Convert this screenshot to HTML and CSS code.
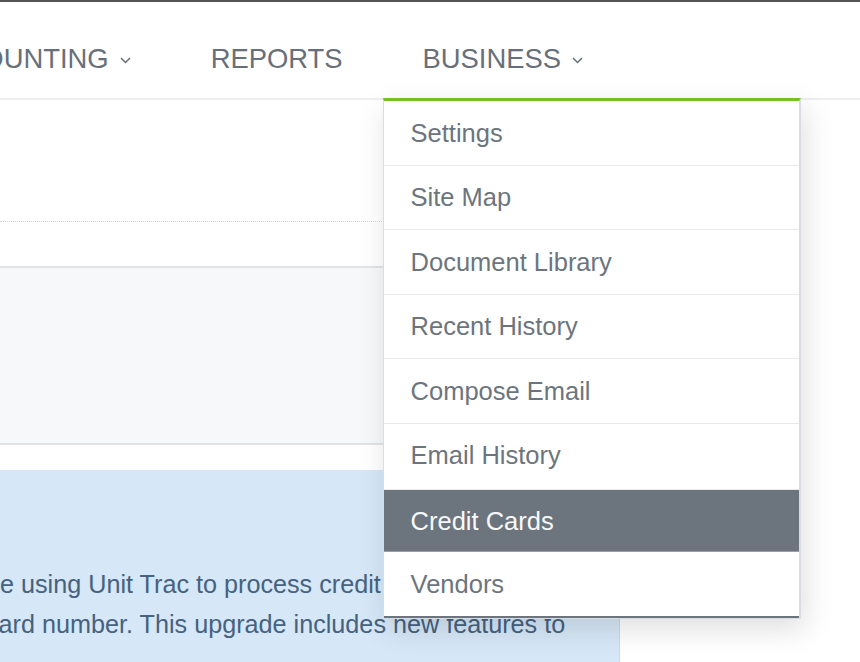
FILE: index.html
```html
<!DOCTYPE html>
<html lang="en">
  <head>
    <meta charset="UTF-8" />
    <meta name="viewport" content="width=device-width, initial-scale=1.0" />
    <title>Credit Cards</title>
    <link rel="stylesheet" href="styles.css">
  </head>
  <body>
    <header class="topbar">
      <ul class="nav">
        <li class="nav-item">
          ACCOUNTING
          <svg class="caret" width="11" height="7" viewBox="0 0 11 7"><polyline points="1,1 5.5,5.5 10,1" /></svg>
        </li>
        <li class="nav-item">REPORTS</li>
        <li class="nav-item open">
          BUSINESS
          <svg class="caret" width="11" height="7" viewBox="0 0 11 7"><polyline points="1,1 5.5,5.5 10,1" /></svg>
          <ul class="dropdown">
            <li class="dropdown-item">Settings</li>
            <li class="dropdown-item">Site Map</li>
            <li class="dropdown-item">Document Library</li>
            <li class="dropdown-item">Recent History</li>
            <li class="dropdown-item">Compose Email</li>
            <li class="dropdown-item pre-active">Email History</li>
            <li class="dropdown-item active">Credit Cards</li>
            <li class="dropdown-item last">Vendors</li>
          </ul>
        </li>
      </ul>
    </header>

    <main class="content">
      <div class="title-row"></div>
      <div class="filter-box"></div>
      <div class="notice">
        <p class="notice-text">
          <span class="line">If you are using Unit Trac to process credit card payments</span>
          <span class="line">stored card number. This upgrade includes new features to</span>
        </p>
      </div>
    </main>
  </body>
</html>
```

FILE: styles.css
```css
body {
  margin: 0;
  background-color: white;
  font-family: "Liberation Sans", Arial, sans-serif;
  overflow: hidden;
  height: 662px;
}
ul {
  list-style: none;
  margin: 0;
  padding: 0;
}
.topbar {
  border-top: 2px solid #555;
  border-bottom: 2px solid #eceef0;
  height: 96px;
}
.nav {
  display: flex;
  margin-left: -115.5px;
}
.nav-item {
  position: relative;
  display: flex;
  align-items: center;
  padding: 37px 40px 19px;
  line-height: 40px;
  font-size: 27.4px;
  color: #67707a;
  white-space: nowrap;
}
.caret {
  margin-left: 11px;
  margin-top: 2px;
  fill: none;
  stroke: #666d74;
  stroke-width: 1.5;
}
.dropdown {
  position: absolute;
  top: 96px;
  left: 0;
  width: 415px;
  background-color: white;
  border-top: 3px solid #78c11d;
  border-left: 1px solid #d9dde2;
  border-right: 2px solid #d9dde2;
  border-bottom: 1px solid #d9dde2;
  box-shadow: 4px 10px 28px rgba(0, 0, 0, 0.13);
  z-index: 5;
}
.dropdown-item {
  padding: 16.75px 27px;
  line-height: 30px;
  font-size: 25.5px;
  color: #6c757d;
  border-bottom: 1px solid #e7e9ec;
}
.dropdown-item.pre-active {
  padding-bottom: 18.25px;
}
.dropdown-item.active {
  background-color: #6c757d;
  color: #f8f9fa;
  padding-top: 16.25px;
  padding-bottom: 14.75px;
  border-bottom-color: #9aa0a6;
}
.dropdown-item.last {
  border-bottom: 2px solid #6c757d;
  padding-top: 17.5px;
  padding-bottom: 16.5px;
}
.content {
  width: 620px;
}
.title-row {
  height: 121px;
  border-bottom: 1px dotted #d5d7da;
}
.filter-box {
  margin-top: 44px;
  height: 175px;
  background-color: #f7f8fa;
  border-top: 2px solid #e1e3e6;
  border-bottom: 2px solid #e1e3e6;
}
.notice {
  margin-top: 25px;
  height: 200px;
  background-color: #d6e7f7;
  border-right: 1px solid #c3daf1;
  padding-top: 94px;
  overflow: hidden;
}
.notice-text {
  margin: 0 0 0 -91px;
  font-size: 25.2px;
  line-height: 40px;
  color: #45627f;
}
.line {
  display: block;
  white-space: nowrap;
}
```
